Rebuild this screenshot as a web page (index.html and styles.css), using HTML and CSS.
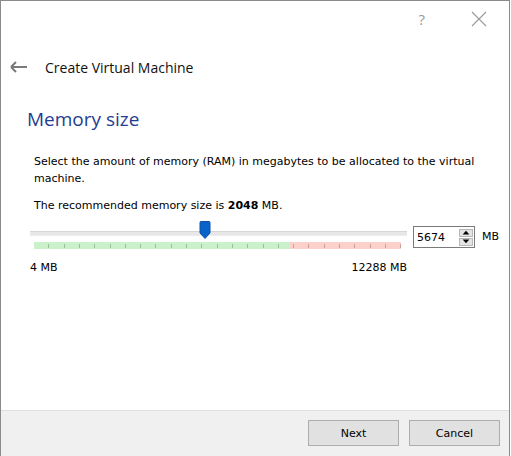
FILE: index.html
```html
<!DOCTYPE html>
<html>
<head>
<meta charset="utf-8">
<link rel="stylesheet" href="styles.css">
</head>
<body>
<div class="window">
  <div class="titlebar">
    <span class="help">?</span>
    <span class="close"><svg width="16" height="16" viewBox="0 0 16 16"><path d="M1 1L15 15M15 1L1 15" stroke="#9a9a9a" stroke-width="1.1" fill="none"/></svg></span>
  </div>
  <div class="header">
    <svg class="back" width="18" height="12" viewBox="0 0 18 12"><path d="M1 6H17M1 6L6 1M1 6L6 11" stroke="#7a7a7a" stroke-width="2" fill="none"/></svg>
    <span class="title">Create Virtual Machine</span>
  </div>
  <div class="content">
    <h1 class="heading">Memory size</h1>
    <p class="desc">Select the amount of memory (RAM) in megabytes to be allocated to the virtual machine.</p>
    <p class="rec">The recommended memory size is <b>2048</b> MB.</p>
    <div class="control-row">
      <div class="slider">
        <div class="groove"></div>
        <div class="ticks"><div class="green"></div><div class="red"></div></div>
        <div class="handle"><svg width="12" height="18" viewBox="0 0 12 18"><path d="M1 1.5Q1 0.5 2 0.5H10Q11 0.5 11 1.5V12L6 17.5L1 12Z" fill="#0a63c9" stroke="#0a52a8" stroke-width="1"/></svg></div>
        <div class="labels"><span>4 MB</span><span>12288 MB</span></div>
      </div>
      <div class="spin">
        <span class="value">5674</span>
        <span class="arrows">
          <span class="arr"><svg width="9" height="6" viewBox="0 0 9 6"><path d="M0.5 5.5L4.5 1L8.5 5.5Z" fill="#000"/></svg></span>
          <span class="arr"><svg width="9" height="6" viewBox="0 0 9 6"><path d="M0.5 0.5L4.5 5L8.5 0.5Z" fill="#000"/></svg></span>
        </span>
      </div>
      <span class="unit">MB</span>
    </div>
  </div>
  <div class="footer">
    <button class="btn">Next</button>
    <button class="btn">Cancel</button>
  </div>
</div>
</body>
</html>
```
FILE: styles.css
```css
html, body {
  margin: 0;
  padding: 0;
  background: #ffffff;
}
.window {
  width: 508px;
  height: 455px;
  border: 1px solid #8a8a8a;
  border-bottom-color: #9a9a9a;
  display: flex;
  flex-direction: column;
  background: #fff;
  font-family: "DejaVu Sans", Tahoma, sans-serif;
  font-size: 11px;
  color: #000;
}
.titlebar {
  height: 38px;
  display: flex;
  align-items: center;
  justify-content: flex-end;
  padding-right: 22px;
  gap: 46px;
}
.help {
  font-family: "Open Sans", sans-serif;
  font-size: 15px;
  color: #9a9a9a;
  margin-top: -2px;
}
.close { display: flex; margin-top: -2px; }
.header {
  height: 32px;
  display: flex;
  align-items: center;
  padding-left: 9px;
  gap: 17px;
  margin-top: 12px;
}
.back { display: block; }
.title {
  font-family: "Open Sans", sans-serif;
  font-size: 14px;
  color: #111;
}
.content {
  flex: 1;
  padding-left: 33px;
  padding-right: 0;
}
.heading {
  margin: 23px 0 0 -7px;
  font-family: "Open Sans", sans-serif;
  font-weight: normal;
  font-size: 19px;
  line-height: 26px;
  color: #1f3d92;
}
.desc {
  margin: 21px 0 0 0;
  line-height: 17px;
  padding-right: 30px;
}
.rec {
  margin: 10px 0 0 0;
  line-height: 17px;
}
.rec b { font-weight: bold; }
.control-row {
  display: flex;
  align-items: flex-start;
  margin-top: 7px;
  margin-left: -4px;
}
.slider {
  position: relative;
  width: 377px;
  flex-shrink: 0;
  padding-top: 10px;
}
.groove {
  height: 3px;
  background: #e7e7e7;
  border-top: 1px solid #d6d6d6;
  border-bottom: 1px solid #ececec;
}
.ticks {
  display: flex;
  margin: 6px 6px 0 4px;
  height: 7px;
  background-image: repeating-linear-gradient(90deg, transparent 0, transparent 14.3px, #8a9a8a 14.3px, #8a9a8a 15.3px);
  background-size: 100% 4px;
  background-repeat: no-repeat;
  background-position: 0 2px;
}
.green { width: 256px; background: rgba(160, 230, 160, 0.55); }
.red { flex: 1; background: rgba(250, 170, 160, 0.55); }
.handle {
  position: absolute;
  left: 169px;
  top: 0;
  display: flex;
}
.labels {
  display: flex;
  justify-content: space-between;
  margin-top: 12px;
  line-height: 14px;
}
.spin {
  flex-shrink: 0;
  margin-left: 6px;
  margin-top: 5px;
  width: 60px;
  height: 20px;
  border: 1px solid #7a7a7a;
  display: flex;
  align-items: center;
  justify-content: space-between;
}
.value { padding-left: 3px; }
.arrows {
  display: flex;
  flex-direction: column;
  gap: 1px;
  margin-right: 1px;
}
.arr {
  width: 14px;
  height: 8px;
  background: #e4e4e4;
  border: 1px solid #b8b8b8;
  box-sizing: border-box;
  display: flex;
  align-items: center;
  justify-content: center;
}
.arr svg { width: 8px; height: 5px; }
.unit {
  margin-left: 7px;
  margin-top: 9px;
}
.footer {
  height: 46px;
  background: #f0f0f0;
  border-top: 1px solid #dedede;
  display: flex;
  justify-content: flex-end;
  align-items: flex-start;
  padding: 9px 9px 0 0;
  gap: 10px;
  box-sizing: border-box;
}
.btn {
  width: 91px;
  height: 26px;
  background: #e1e1e1;
  border: 1px solid #adadad;
  font-family: "DejaVu Sans", Tahoma, sans-serif;
  font-size: 11px;
  color: #000;
  padding: 0;
}
```
